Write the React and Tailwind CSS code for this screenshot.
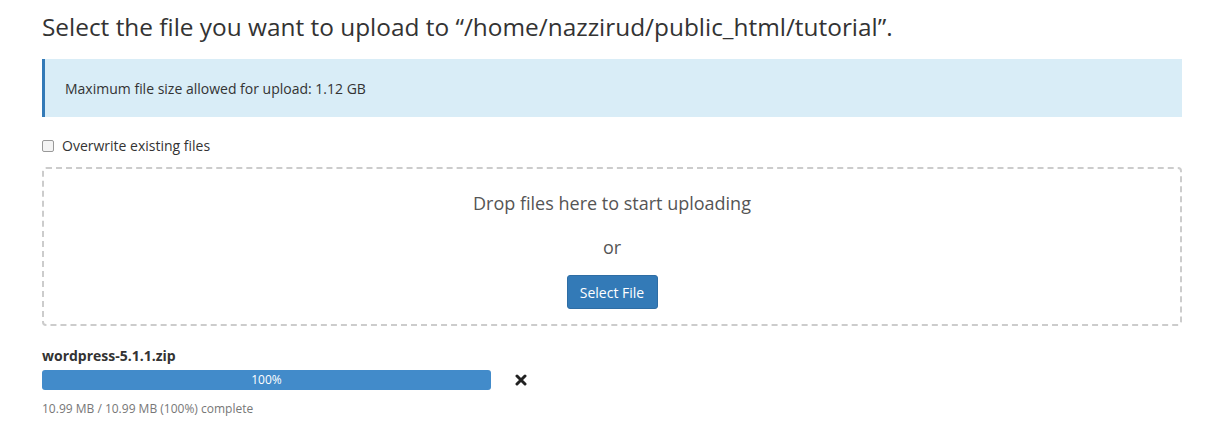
export default function App() {
  return (
    <div className="min-h-screen bg-white px-[42px] pt-[10px] text-[#333] font-['Open_Sans',sans-serif]">
      {/* Heading */}
      <h1 className="text-[24.4px] leading-[34px] font-normal text-[#333]">
        Select the file you want to upload to “/home/nazzirud/public_html/tutorial”.
      </h1>

      {/* Info alert */}
      <div className="mt-[15px] flex h-[58px] w-[1140px] items-center border-l-[3px] border-[#337ab7] bg-[#d9edf7] pl-[20px] text-[14px] text-[#333]">
        Maximum file size allowed for upload: 1.12 GB
      </div>

      {/* Overwrite checkbox */}
      <label className="mt-[20px] flex items-center gap-[8px] text-[14px] leading-[18px] text-[#333]">
        <span className="h-[12px] w-[12px] rounded-[2px] border border-[#999] bg-[#f4f4f4]" />
        Overwrite existing files
      </label>

      {/* Drop zone */}
      <div className="mt-[12px] flex h-[159px] w-[1140px] flex-col items-center rounded-[4px] border-2 border-dashed border-[#ccc] pt-[21px]">
        <p className="text-[18px] leading-[26px] text-[#555]">Drop files here to start uploading</p>
        <p className="mt-[18px] text-[18px] leading-[26px] text-[#555]">or</p>
        <button className="mt-[15px] h-[34px] w-[91px] rounded-[3px] border border-[#2e6da4] bg-[#337ab7] text-[14px] text-white">
          Select File
        </button>
      </div>

      {/* Upload progress */}
      <div className="mt-[20px]">
        <div className="text-[14px] font-bold leading-[20px] text-[#333]">wordpress-5.1.1.zip</div>
        <div className="mt-[4px] flex items-center">
          <div className="flex h-[20px] w-[449px] items-center justify-center rounded-[3px] bg-[#428bca] text-[12px] text-white">
            100%
          </div>
          <svg className="ml-[24px]" width="12" height="12" viewBox="0 0 12 12">
            <path d="M2 2 L10 10 M10 2 L2 10" stroke="#222" strokeWidth="3" strokeLinecap="round" />
          </svg>
        </div>
        <div className="mt-[10px] text-[12px] leading-[18px] text-[#777]">
          10.99 MB / 10.99 MB (100%) complete
        </div>
      </div>
    </div>
  );
}
